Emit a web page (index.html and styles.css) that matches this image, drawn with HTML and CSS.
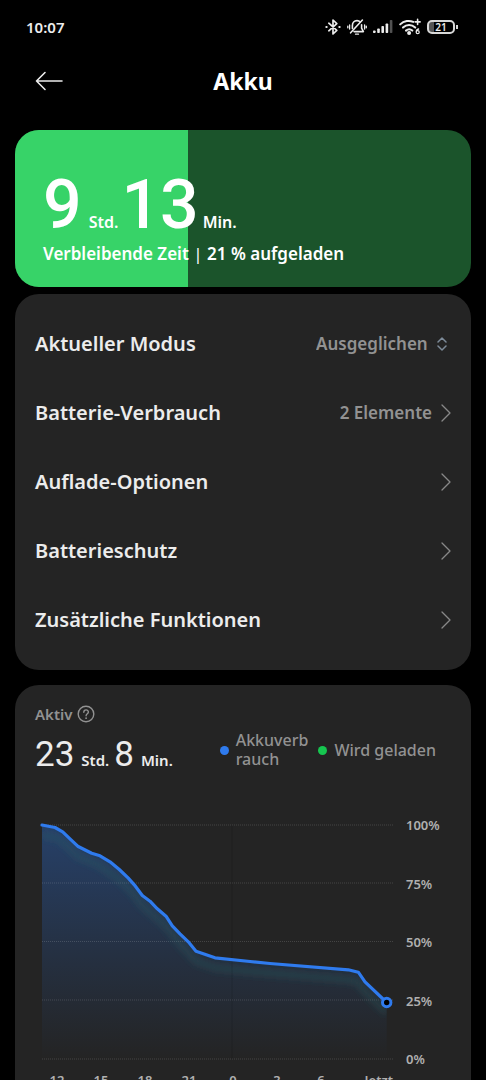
FILE: index.html
```html
<!DOCTYPE html>
<html lang="de">
<head>
<meta charset="utf-8">
<meta name="viewport" content="width=device-width, initial-scale=1">
<title>Akku</title>
<link rel="stylesheet" href="styles.css">
</head>
<body>
<div class="status-bar">
  <span class="clock">10:07</span>
  <div class="status-icons">
    <svg width="16" height="18" viewBox="0 0 16 18" fill="none" stroke="currentColor" stroke-width="1.7" stroke-linejoin="round" stroke-linecap="round"><path d="M3.8 5.2 11.8 12.4 8 16V2l3.8 3.6-8 7.2"/><path d="M1.4 9h.2M14.4 9h.2" stroke-width="2.2"/></svg>
    <svg width="20" height="18" viewBox="0 0 20 18" fill="none" stroke="currentColor" stroke-width="1.6" stroke-linecap="round" stroke-linejoin="round"><path d="M13.2 4.1C12.3 3 11.200 2.600 10 2.600 7.200 2.600 5.400 4.700 5.400 7.400v3M14.600 6.800v3.400l1.800 3.400H7"/><path d="M15.400 2 3.600 14.800"/><path d="M8.500 16.200h3M2.600 7v4M17.600 7v4M.8 8.200v1.600M19.300 8.200v1.600" stroke-width="1.300"/></svg>
    <svg width="20" height="14" viewBox="0 0 20 14" fill="currentColor"><rect y="10.500" width="2.600" height="2.500" rx=".8"/><rect x="4.200" y="8.500" width="2.600" height="4.500" rx=".8"/><rect x="8.400" y="6" width="2.600" height="7" rx=".8"/><rect x="12.600" y="3.500" width="2.600" height="9.500" rx=".8"/><rect x="16.800" y="0" width="2.600" height="13" rx=".8" opacity=".35"/></svg>
    <svg width="22" height="18" viewBox="0 0 22 18" fill="none" stroke="currentColor" stroke-width="2" stroke-linecap="round"><path d="M1.200 6.400C5 2.600 10.500 2.100 14.200 3.900M4 9.600c3.600-3.400 8.600-3.400 12.200 0M7 12.600c2-1.600 4.400-1.600 6.300 0"/><circle cx="10.100" cy="15" r="1"/><path d="M18.600 1.400v5M16.100 3.900h5" stroke-width="1.600"/><path d="M19.600 11c-1.700.4-2.400 1.800-2.400 3.200a1.500 1.500 0 1 0 1.500-1.500" stroke-width="1.300"/></svg>
    <span class="battery">21</span>
  </div>
</div>

<header class="nav">
  <button class="back" type="button" aria-label="Zurück">
    <svg width="28" height="20" viewBox="0 0 28 20" fill="none" stroke="currentColor" stroke-width="1.600" stroke-linecap="round" stroke-linejoin="round"><path d="M27 10H1.500M10 1.500 1.500 10l8.500 8.500"/></svg>
  </button>
  <h1 class="title">Akku</h1>
</header>

<main class="content">
  <section class="charge">
    <div class="charge-level" style="width: 38%"></div>
    <div class="charge-text">
      <p class="remaining"><span class="digits">9</span><span class="unit">Std.</span><span class="digits">13</span><span class="unit">Min.</span></p>
      <p class="caption">Verbleibende Zeit <span class="bar">|</span> 21 % aufgeladen</p>
    </div>
  </section>

  <section class="card options">
    <div class="row">
      <label for="mode">Aktueller Modus</label>
      <span class="value picker">
        <select id="mode"><option>Ausgeglichen</option></select>
        <svg width="10" height="14" viewBox="0 0 10 14" fill="none" stroke="currentColor" stroke-width="1.500" stroke-linecap="round" stroke-linejoin="round"><path d="M1 5l4-4 4 4M1 9l4 4 4-4"/></svg>
      </span>
    </div>
    <a class="row" href="#verbrauch">Batterie-Verbrauch<span class="value">2 Elemente<svg class="chevron" viewBox="0 0 10 18"><path d="M1 1l8 8-8 8"/></svg></span></a>
    <a class="row" href="#aufladen">Auflade-Optionen<span class="value"><svg class="chevron" viewBox="0 0 10 18"><path d="M1 1l8 8-8 8"/></svg></span></a>
    <a class="row" href="#schutz">Batterieschutz<span class="value"><svg class="chevron" viewBox="0 0 10 18"><path d="M1 1l8 8-8 8"/></svg></span></a>
    <a class="row" href="#funktionen">Zusätzliche Funktionen<span class="value"><svg class="chevron" viewBox="0 0 10 18"><path d="M1 1l8 8-8 8"/></svg></span></a>
  </section>

  <section class="card usage">
    <div class="usage-title">Aktiv
      <button class="help" type="button" aria-label="Hilfe"><svg width="18" height="18" viewBox="0 0 18 18" fill="none" stroke="currentColor" stroke-width="1.400" stroke-linecap="round"><circle cx="9" cy="9" r="7.800"/><path d="M6.800 7.200c0-3 4.600-3 4.600-.2 0 1.700-2.300 1.700-2.300 3.700"/><path d="M9.100 13.100v.1" stroke-width="1.700"/></svg></button>
    </div>
    <div class="usage-head">
      <p class="active-time"><span class="number">23</span><span class="unit">Std.</span><span class="number">8</span><span class="unit">Min.</span></p>
      <ul class="legend">
        <li class="drain">Akkuverb<br>rauch</li>
        <li class="charging">Wird geladen</li>
      </ul>
    </div>
    <div class="chart">
      <svg class="plot" viewBox="-2 -2.500 358 250" fill="none">
        <defs>
          <linearGradient id="fill" x1="0" y1="0" x2="0" y2="1"><stop offset="0" stop-color="#2b7af5" stop-opacity=".33"/><stop offset=".5" stop-color="#2b7af5" stop-opacity=".16"/><stop offset="1" stop-color="#2b7af5" stop-opacity="0"/></linearGradient>
          <clipPath id="area"><path d="M5 5.500 18 8 25.700 12.300 33 19.300 40.700 26.700 54.700 33.700 63 36.300 73 42.300 82.300 50 91.300 58.700 97.300 65.300 105.300 76 113 81.700 120.300 89.300 129 96.700 135.300 106.300 143 114.300 151.300 122.300 159 131.700 178 138.300 213 142 233 144 311.300 150.300 321.300 152.700 328 162.300 349.700 183V239.500H5Z"/></clipPath>
          <filter id="soft" x="-10%" y="-10%" width="120%" height="130%"><feGaussianBlur stdDeviation="3"/></filter>
        </defs>
        <g clip-path="url(#area)">
          <path d="M5 5.500H350V239.500H5Z" fill="url(#fill)"/>
          <path d="M5 15.500 18 18 25.700 22.300 40.700 36.700 63 46.300 82.300 60 97.300 75.300 105.300 86 129 106.700 143 124.300 159 141.700 178 148.300 213 152 311.300 160.300 321.300 162.700 328 172.300 349.700 193" stroke="#2a6468" stroke-opacity=".3" stroke-width="7" filter="url(#soft)"/>
        </g>
        <path d="M5 5.500H356M5 63.500H356M5 122H356M5 180.500H356M5 239.500H356" stroke="#fff" stroke-opacity=".15" stroke-dasharray="1 1"/>
        <path d="M195 5.500V239.500" stroke="#000" stroke-opacity=".12"/>
        <path d="M5 5.500 18 8 25.700 12.300 33 19.300 40.700 26.700 54.700 33.700 63 36.300 73 42.300 82.300 50 91.300 58.700 97.300 65.300 105.300 76 113 81.700 120.300 89.300 129 96.700 135.300 106.300 143 114.300 151.300 122.300 159 131.700 178 138.300 213 142 233 144 311.300 150.300 321.300 152.700 328 162.300 349.700 183" stroke="#2f7bee" stroke-width="3.200" stroke-linejoin="round" stroke-linecap="round"/>
        <circle cx="349.700" cy="183" r="4.200" fill="#000" stroke="#2f7bee" stroke-width="3"/>
      </svg>
      <div class="y-axis"><span>100%</span><span>75%</span><span>50%</span><span>25%</span><span>0%</span></div>
      <div class="x-axis"><span>12</span><span>15</span><span>18</span><span>21</span><span>0</span><span>3</span><span>6</span><span class="now">Jetzt</span></div>
    </div>
  </section>
</main>
</body>
</html>
```
FILE: styles.css
```css
* {
  box-sizing: border-box;
  margin: 0;
}

body {
  display: flex;
  flex-direction: column;
  height: 100vh;
  overflow: hidden;
  background: #000;
  color: #ececec;
  font: 600 20px/28px "Noto Sans", sans-serif;
}

button,
select {
  padding: 0;
  border: 0;
  background: none;
  color: inherit;
  font: inherit;
}

svg {
  flex: none;
}

.status-bar {
  display: flex;
  flex: none;
  justify-content: space-between;
  align-items: center;
  height: 54px;
  padding: 0 31px 0 26px;
  font-size: 15px;
}

.status-icons {
  display: flex;
  align-items: center;
  gap: 6px;
}

.battery {
  position: relative;
  width: 28px;
  height: 14px;
  border: 2px solid #d8d8d8;
  border-radius: 5px;
  background: linear-gradient(90deg, #555 21%, transparent 21%);
  font-size: 10px;
  line-height: 10px;
  text-align: center;
}

.battery::after {
  content: "";
  position: absolute;
  top: 3px;
  right: -5px;
  width: 2px;
  height: 4px;
  background: #d8d8d8;
}

.nav {
  display: grid;
  flex: none;
  grid-template-columns: 1fr auto 1fr;
  align-items: center;
  height: 54px;
  margin-bottom: 22px;
  padding: 0 35px;
}

.back {
  display: flex;
  justify-self: start;
}

.title {
  color: #fff;
  font-size: 23px;
  font-weight: 700;
}

.content {
  flex: 1;
  min-height: 0;
  padding: 0 15px;
  overflow: auto;
  scrollbar-width: none;
}

.charge {
  position: relative;
  margin-bottom: 7px;
  border-radius: 24px;
  overflow: hidden;
  background: #1b542b;
  color: #fff;
}

.charge-level {
  position: absolute;
  inset: 0 auto 0 0;
  background: #37d368;
}

.charge-text {
  position: relative;
  padding: 40px 28px 19px;
}

.remaining {
  display: flex;
  align-items: baseline;
  line-height: 70px;
}

.digits {
  font-family: Roboto, sans-serif;
  font-size: 68px;
  font-weight: 500;
}

.unit {
  margin: 0 3px 0 7px;
  font-size: 16px;
  line-height: 20px;
}

.digits + .unit:last-child {
  margin-left: 4px;
}

.caption {
  font-size: 17px;
}

.bar {
  font-weight: 400;
}

.card {
  border-radius: 24px;
  background: #242424;
}

.options {
  margin-bottom: 15px;
  padding: 15px 20px 16px;
}

.row {
  display: flex;
  justify-content: space-between;
  align-items: center;
  height: 69px;
  color: inherit;
  text-decoration: none;
}

.value {
  display: flex;
  align-items: center;
  gap: 9px;
  color: #929292;
  font-size: 17px;
}

.picker {
  padding-right: 4px;
}

.picker svg {
  color: #7d8b99;
}

select {
  appearance: none;
}

.chevron {
  width: 10px;
  height: 18px;
  fill: none;
  stroke: #888;
  stroke-width: 1.3;
  stroke-linecap: round;
  stroke-linejoin: round;
}

.usage {
  padding: 18px 20px 20px;
}

.usage-title {
  display: flex;
  align-items: center;
  gap: 5px;
  height: 22px;
  color: #929292;
  font-size: 15px;
}

.help {
  display: flex;
}

.usage-head {
  display: flex;
  justify-content: space-between;
  align-items: flex-start;
  padding: 6px 15px 0 0;
}

.active-time {
  display: flex;
  align-items: baseline;
  padding-top: 4px;
  line-height: 40px;
}

.active-time .unit {
  margin-right: 5px;
  font-size: 15px;
}

.number {
  font-family: Roboto, sans-serif;
  font-size: 35px;
  font-weight: 400;
}

.legend {
  display: flex;
  align-items: center;
  gap: 10px;
  padding: 0;
  list-style: none;
  color: #929292;
  font-size: 16px;
  font-weight: 500;
  line-height: 19px;
}

.legend li {
  display: flex;
  flex-wrap: nowrap;
  align-items: center;
}

.legend li::before {
  content: "";
  flex: none;
  width: 9px;
  height: 9px;
  margin-right: 7px;
  border-radius: 50%;
  background: #2f7bee;
}

.legend .charging::before {
  background: #16c650;
}

.chart {
  display: grid;
  grid-template-columns: 1fr 45px;
  column-gap: 13px;
  margin-top: 42px;
  color: #b0b0b0;
  font-size: 13px;
  line-height: 16px;
}

.plot {
  display: block;
  width: 100%;
}

.y-axis {
  display: flex;
  flex-direction: column;
  justify-content: space-between;
}

.x-axis {
  display: grid;
  grid-template-columns: repeat(7, 44fr) 50fr;
  padding-top: 5px;
  text-align: center;
}

.now {
  text-align: right;
}
```
